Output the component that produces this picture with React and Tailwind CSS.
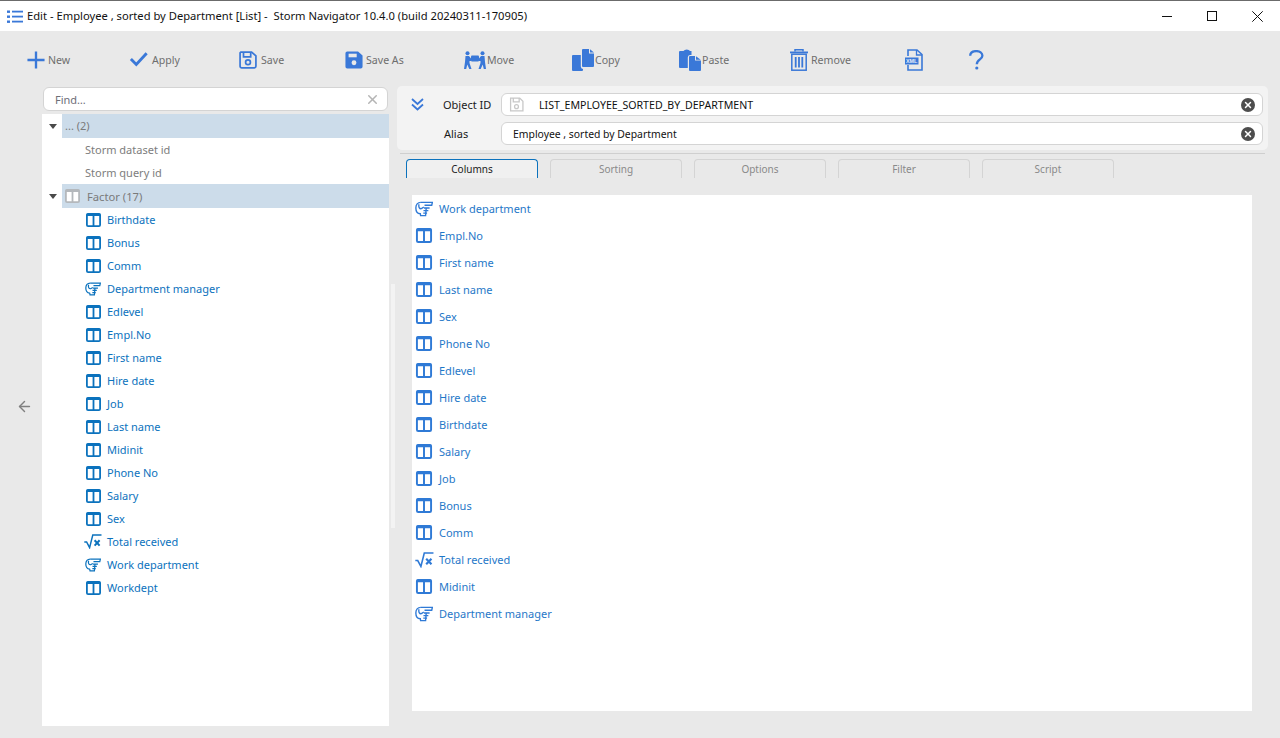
import { X, ArrowLeft } from 'lucide-react'

const BLUE = '#3a78d8'

const TableIcon = ({ color = '#0b72bd', w = 15, h = 14 }) => (
    <svg width={w} height={h} viewBox="0 0 15 14" className="shrink-0">
        <rect x="0.9" y="0.9" width="13.2" height="12.2" rx="1.2" fill="white" stroke={color} strokeWidth="1.8" />
        <rect x="0.5" y="0.5" width="14" height="2.6" rx="1" fill={color} />
        <rect x="6.6" y="1" width="1.8" height="12" fill={color} />
    </svg>
)

const HandIcon = ({ color, w = 16, h = 14 }) => (
    <svg width={w} height={h} viewBox="0 0 17 15" fill="none" stroke={color} strokeWidth="1.3" className="shrink-0">
        <path d="M5.5 1.2 H16.4 L15.8 3.9 H9" />
        <path d="M5.5 1.2 C2.5 1.2 0.8 3.3 0.8 6.5 C0.8 9.8 2.5 11.8 5 12 L5.3 13.8 H10 L10.6 6.4" />
        <path d="M3.8 3 C3 5.5 4.2 7.5 6 7.2 L8.3 5.8" />
        <path d="M8.5 6.5 H13.8 M8 9 H12.6 M7.8 11.4 H11.4" />
    </svg>
)

const SqrtIcon = ({ color, w = 18, h = 15 }) => (
    <svg width={w} height={h} viewBox="0 0 18 15" fill="none" stroke={color} className="shrink-0">
        <path d="M0.3 8 H2.6 L5.6 13.6 L8.8 0.9 H17.5" strokeWidth="1.5" />
        <path d="M10.6 6.3 L15.6 11.6 M15.6 6.3 L10.6 11.6" strokeWidth="2" />
    </svg>
)

const ColIcon = ({ type, large }) => {
    const color = large ? '#2f7ad6' : '#0b72bd'
    if (type === 'hand') return large ? <HandIcon color={color} w={18} h={16} /> : <HandIcon color={color} />
    if (type === 'sqrt') return large ? <SqrtIcon color={color} w={19} h={16} /> : <SqrtIcon color={color} />
    return large ? <TableIcon color={color} w={18} h={15} /> : <TableIcon color={color} />
}

const toolIcons = {
    New: (
        <path d="M8.7 0.5 H11.3 V8.7 H19.5 V11.3 H11.3 V19.5 H8.7 V11.3 H0.5 V8.7 H8.7 Z" fill={BLUE} />
    ),
    Apply: (
        <path d="M1 9 L7 15 L18.5 2.5" fill="none" stroke={BLUE} strokeWidth="3.2" />
    ),
    Save: (
        <g fill="none" stroke={BLUE} strokeWidth="1.9">
            <path d="M2 1.2 H14 L18.8 5.5 V17 A1.8 1.8 0 0 1 17 18.8 H3 A1.8 1.8 0 0 1 1.2 17 V2 Z" />
            <path d="M5 1.5 V6.5 H13 V1.5" />
            <circle cx="10" cy="12.5" r="2.7" />
        </g>
    ),
    'Save As': (
        <g>
            <path d="M2.5 0.5 H14.5 L19.5 5 V17.5 A2 2 0 0 1 17.5 19.5 H2.5 A2 2 0 0 1 0.5 17.5 V2.5 A2 2 0 0 1 2.5 0.5 Z" fill={BLUE} />
            <rect x="4" y="3" width="9" height="4" fill="#e9e9e9" />
            <circle cx="10" cy="13" r="2.7" fill="#e9e9e9" />
        </g>
    ),
    Move: (
        <g fill={BLUE}>
            <circle cx="3.5" cy="2.2" r="2" />
            <circle cx="18.5" cy="2.2" r="2" />
            <rect x="7" y="4.5" width="8" height="6" rx="1" />
            <path d="M1.5 5 H5 L7 7.5 V10 L5.5 10 V12 L7.5 18 H5.3 L3.3 13.5 L2.2 18 H0 L1 11 Z" />
            <path d="M20.5 5 H17 L15 7.5 V10 L16.5 10 V12 L14.5 18 H16.7 L18.7 13.5 L19.8 18 H22 L21 11 Z" />
        </g>
    ),
    Copy: (
        <g fill={BLUE}>
            <path d="M11 0 H17 V4.5 H22 V17 A1 1 0 0 1 21 18 H11 A1 1 0 0 1 10 17 V1 A1 1 0 0 1 11 0 Z" />
            <path d="M18 0.3 L22 3.6 H18 Z" />
            <path d="M1 6 H8.8 V17.5 A2.5 2.5 0 0 0 11 20 V21 A1 1 0 0 1 10 22 H1 A1 1 0 0 1 0 21 V7 A1 1 0 0 1 1 6 Z" />
        </g>
    ),
    Paste: (
        <g fill={BLUE}>
            <path d="M1 2 H4.5 A3.5 2.5 0 0 1 11 2 H12.5 V6 H11 A2.5 2.5 0 0 0 8.8 8.5 V19 H1 A1 1 0 0 1 0 18 V3 A1 1 0 0 1 1 2 Z" />
            <path d="M11 7 H16 V11.5 H22 V21 A1 1 0 0 1 21 22 H11 A1 1 0 0 1 10 21 V8 A1 1 0 0 1 11 7 Z" />
            <path d="M17 7.3 L21.7 10.8 H17 Z" />
        </g>
    ),
    Remove: (
        <g fill="none" stroke={BLUE} strokeWidth="1.5">
            <path d="M0 3.4 H18" strokeWidth="1.8" />
            <path d="M5 2.6 V0.8 H13 V2.6" />
            <rect x="1.8" y="5.2" width="14.4" height="16" />
            <path d="M5.7 8 V18.5 M9 8 V18.5 M12.3 8 V18.5" strokeWidth="1.8" />
        </g>
    ),
}

const TOOLS = [
    { name: 'New', w: 102, vw: 20, vh: 20, iw: 18, ih: 18, gap: 3 },
    { name: 'Apply', w: 110, vw: 20, vh: 20, iw: 20, ih: 18, gap: 3 },
    { name: 'Save', w: 106, vw: 20, vh: 20, iw: 18, ih: 18, gap: 4 },
    { name: 'Save As', w: 119, vw: 20, vh: 20, iw: 18, ih: 18, gap: 3 },
    { name: 'Move', w: 108, vw: 22, vh: 18, iw: 22, ih: 18, gap: 1 },
    { name: 'Copy', w: 107, vw: 22, vh: 22, iw: 22, ih: 22, gap: 1 },
    { name: 'Paste', w: 111, vw: 22, vh: 22, iw: 22, ih: 22, gap: 1 },
    { name: 'Remove', w: 115, vw: 18, vh: 22, iw: 18, ih: 22, gap: 3 },
]

const TREE = [
    ['table', 'Birthdate'],
    ['table', 'Bonus'],
    ['table', 'Comm'],
    ['hand', 'Department manager'],
    ['table', 'Edlevel'],
    ['table', 'Empl.No'],
    ['table', 'First name'],
    ['table', 'Hire date'],
    ['table', 'Job'],
    ['table', 'Last name'],
    ['table', 'Midinit'],
    ['table', 'Phone No'],
    ['table', 'Salary'],
    ['table', 'Sex'],
    ['sqrt', 'Total received'],
    ['hand', 'Work department'],
    ['table', 'Workdept'],
]

const COLUMNS = [
    ['hand', 'Work department'],
    ['table', 'Empl.No'],
    ['table', 'First name'],
    ['table', 'Last name'],
    ['table', 'Sex'],
    ['table', 'Phone No'],
    ['table', 'Edlevel'],
    ['table', 'Hire date'],
    ['table', 'Birthdate'],
    ['table', 'Salary'],
    ['table', 'Job'],
    ['table', 'Bonus'],
    ['table', 'Comm'],
    ['sqrt', 'Total received'],
    ['table', 'Midinit'],
    ['hand', 'Department manager'],
]

const TABS = ['Columns', 'Sorting', 'Options', 'Filter', 'Script']

const Caret = () => (
    <svg width="8" height="5" viewBox="0 0 8 5" className="shrink-0"><path d="M0 0 H8 L4 5 Z" fill="#4a4a4a" /></svg>
)

const ClearBtn = () => (
    <span className="w-[14px] h-[14px] rounded-full bg-[#4d4d4d] flex items-center justify-center shrink-0">
        <X size={10} strokeWidth={3.5} color="#fff" />
    </span>
)

const FieldRow = ({ label, children, clsLabel }) => (
    <div className="flex items-center h-[23px]">
        <span className={`w-[58px] pt-[2px] text-[#1a1a1a] text-[11px] ${clsLabel}`}>{label}</span>
        <div className="flex-1 h-[23px] bg-white border border-[#d4d4d4] rounded-[6px] flex items-center pr-[7px]">
            {children}
            <span className="flex-1" />
            <ClearBtn />
        </div>
    </div>
)

export default function App() {
    return (
        <div className="w-[1280px] h-[738px] overflow-hidden bg-[#e9e9e9] flex flex-col text-[11px] font-['Open_Sans','Noto_Sans',sans-serif]">
            {/* Title bar */}
            <div className="h-[31px] bg-white border-t border-[#6b6b6b] flex items-center shrink-0">
                <svg width="16" height="13" viewBox="0 0 16 13" className="ml-[7px] mr-[4px]" fill={BLUE}>
                    <rect x="0" y="0.5" width="3" height="2.4" /><rect x="5" y="0.7" width="11" height="1.8" />
                    <rect x="0" y="5.5" width="3" height="2.4" /><rect x="5" y="5.7" width="11" height="1.8" />
                    <rect x="0" y="10.5" width="3" height="2.4" /><rect x="5" y="10.7" width="11" height="1.8" />
                </svg>
                <span className="text-[#111] text-[11.2px] whitespace-pre">Edit - Employee , sorted by Department [List] -  Storm Navigator 10.4.0 (build 20240311-170905)</span>
                <span className="flex-1" />
                <div className="flex items-center gap-[35px] pr-[17px]">
                    <svg width="10" height="11" viewBox="0 0 10 11" fill="none" stroke="#111"><path d="M0 5.5 H10" /></svg>
                    <svg width="10" height="10" viewBox="0 0 10 10" fill="none" stroke="#111"><rect x="0.5" y="0.5" width="9" height="9" /></svg>
                    <svg width="11" height="11" viewBox="0 0 11 11" fill="none" stroke="#111"><path d="M0.3 0.3 L10.7 10.7 M10.7 0.3 L0.3 10.7" /></svg>
                </div>
            </div>

            {/* Toolbar */}
            <div className="h-[55px] flex items-center pl-[27px] pt-[3px] shrink-0">
                {TOOLS.map(t => (
                    <div key={t.name} className="flex items-center shrink-0" style={{ width: t.w }}>
                        <svg width={t.iw} height={t.ih} viewBox={`0 0 ${t.vw} ${t.vh}`} className="shrink-0">{toolIcons[t.name]}</svg>
                        <span className="text-[#6e6e6e] text-[10.6px] pt-[2px]" style={{ marginLeft: t.gap }}>{t.name}</span>
                    </div>
                ))}
                <svg width="18" height="22" viewBox="0 0 18 22" fill="none" stroke={BLUE} className="shrink-0">
                    <path d="M3 7 V1 H12 L17 5.5 V21 H3 V16" strokeWidth="1.6" />
                    <path d="M11.5 1 V6 H17" strokeWidth="1.3" />
                    <rect x="0" y="8.5" width="13.5" height="7" fill={BLUE} stroke="none" />
                    <text x="1" y="14" fontSize="5.4" fontWeight="700" fill="#e6eefb" stroke="none" fontFamily="'Liberation Sans', sans-serif">XML</text>
                </svg>
                <svg width="15" height="20" viewBox="0 0 15 20" className="ml-[46px] shrink-0" fill="none" stroke={BLUE}>
                    <path d="M1.2 5.8 C1.2 2.6 4 1.1 7.3 1.1 C10.8 1.1 13.4 3 13.4 5.8 C13.4 9.4 7.8 9.4 7.8 14.2" strokeWidth="2.3" />
                    <circle cx="7.8" cy="18" r="1.6" fill={BLUE} stroke="none" />
                </svg>
            </div>

            {/* Main */}
            <div className="flex-1 flex min-h-0">
                <div className="w-[42px] shrink-0 flex items-center justify-center pb-[12px] pl-[7px]">
                    <ArrowLeft size={17} strokeWidth={2} color="#808080" />
                </div>

                {/* Left tree */}
                <div className="w-[347px] shrink-0 flex flex-col pt-[1px] pb-[12px]">
                    <div className="h-[24px] ml-[1px] mr-[1px] bg-white border border-[#d4d4d4] rounded-[6px] flex items-center pl-[11px] pr-[7px] shrink-0">
                        <span className="text-[#6e6e78] pt-[2px]">Find…</span>
                        <span className="flex-1" />
                        <X size={15} strokeWidth={2.4} color="#b5b5b5" />
                    </div>
                    <div className="flex-1 bg-white mt-[3px] min-h-0">
                        <div className="h-[24px] flex items-center">
                            <span className="w-[20px] flex justify-center pl-[1px]"><Caret /></span>
                            <span className="flex-1 h-full bg-[#ccdcea] flex items-center pl-[3px] text-[#7a7a7a]">... (2)</span>
                        </div>
                        <div className="h-[23px] flex items-center pl-[43px] pt-[2px] text-[#7d7d7d]">Storm dataset id</div>
                        <div className="h-[23px] flex items-center pl-[43px] pt-[2px] text-[#7d7d7d]">Storm query id</div>
                        <div className="h-[24px] flex items-center">
                            <span className="w-[20px] flex justify-center pl-[1px]"><Caret /></span>
                            <span className="flex-1 h-full bg-[#ccdcea] flex items-center pl-[3px] text-[#7a7a7a]">
                                <TableIcon color="#b4b8bc" />
                                <span className="ml-[7px] pt-[2px] text-[11.2px]">Factor (17)</span>
                            </span>
                        </div>
                        {TREE.map(([type, name]) => (
                            <div key={name} className="h-[23px] flex items-center pl-[43px] text-[#0b72bd]">
                                <span className="w-[16px] flex justify-center shrink-0"><ColIcon type={type} /></span>
                                <span className="ml-[6px] pt-[2px]">{name}</span>
                            </div>
                        ))}
                    </div>
                </div>

                {/* Splitter */}
                <div className="w-[8px] shrink-0 flex pl-[2px] pt-[198px]">
                    <span className="w-[4px] h-[244px] bg-[#f3f3f3]" />
                </div>

                {/* Right */}
                <div className="w-[871px] shrink-0 flex flex-col pb-[27px]">
                    <div className="h-[64px] bg-[#f3f3f3] rounded-[5px] flex pl-[14px] pr-[5px] pt-[7px]">
                        <svg width="13" height="13" viewBox="0 0 13 13" fill="none" stroke={BLUE} strokeWidth="1.8" className="shrink-0 mt-[5px]">
                            <path d="M1 1 L6.5 6 L12 1 M1 6.5 L6.5 11.5 L12 6.5" />
                        </svg>
                        <div className="flex-1 ml-[19px]">
                            <FieldRow label="Object ID">
                                <svg width="15" height="15" viewBox="0 0 14 14" fill="none" stroke="#c8c8c8" strokeWidth="1.2" className="ml-[7px]">
                                    <path d="M1.5 1 H10 L13 4 V13 H1.5 Z" /><path d="M4 1 V4.5 H9.5 V1" /><circle cx="7" cy="9" r="1.8" />
                                </svg>
                                <span className="ml-[15px] pt-[2px] text-[#111] text-[10.6px]">LIST_EMPLOYEE_SORTED_BY_DEPARTMENT</span>
                            </FieldRow>
                            <div className="mt-[6px]">
                                <FieldRow label="Alias" clsLabel="pl-[1px]">
                                    <span className="ml-[11px] pt-[2px] text-[#111] text-[10.4px]">Employee , sorted by Department</span>
                                </FieldRow>
                            </div>
                        </div>
                    </div>
                    <div className="h-[1px] bg-[#cfcfcf] mt-[3px] ml-[3px] mr-[3px]" />

                    {/* Tabs */}
                    <div className="flex gap-[12px] mt-[5px] ml-[9px]">
                        {TABS.map((t, i) => (
                            <div
                                key={t}
                                className={`w-[132px] h-[19px] flex items-center justify-center border border-b-0 rounded-t-[4px] text-[10px] ${i === 0 ? 'border-[#0b72bd] text-[#222] bg-[#f0f0f0]' : 'border-[#d4d4d4] text-[#8a8a8a]'}`}
                            >
                                {t}
                            </div>
                        ))}
                    </div>

                    {/* Column list */}
                    <div className="flex-1 bg-white mt-[17px] ml-[15px] mr-[16px] min-h-0">
                        {COLUMNS.map(([type, name]) => (
                            <div key={name} className="h-[27px] flex items-center pl-[3px] text-[#1f78c8]">
                                <span className="w-[18px] flex justify-center shrink-0"><ColIcon type={type} large /></span>
                                <span className="ml-[6px] pt-[2px]">{name}</span>
                            </div>
                        ))}
                    </div>
                </div>
            </div>
        </div>
    )
}
